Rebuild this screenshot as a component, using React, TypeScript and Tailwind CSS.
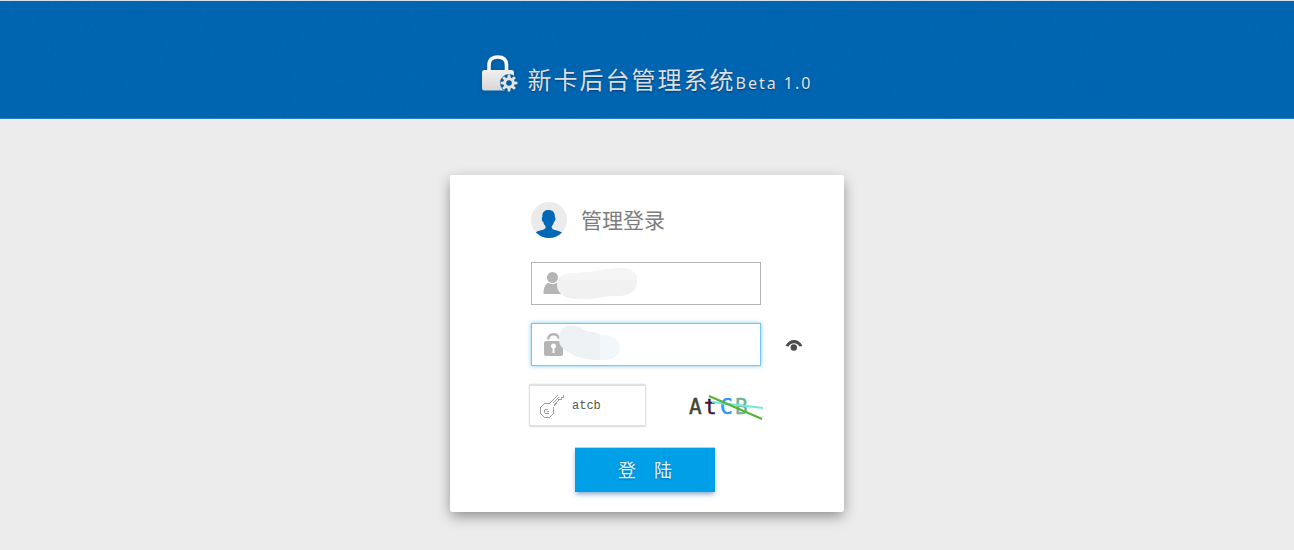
import { useState } from "react";

function HeaderTexture() {
  return (
    <svg className="absolute inset-0 w-full h-full opacity-20" aria-hidden="true">
      <filter id="grain" x="0" y="0" width="100%" height="100%">
        <feTurbulence type="fractalNoise" baseFrequency="0.35" numOctaves="2" seed="4" />
        <feColorMatrix values="0 0 0 0 0  0 0 0 0 0.2  0 0 0 0 0.45  1.8 0 0 0 -0.7" />
      </filter>
      <rect width="100%" height="100%" filter="url(#grain)" />
    </svg>
  );
}

function LockGearIcon() {
  const teeth = [0, 45, 90, 135, 180, 225, 270, 315];
  return (
    <svg width="36" height="38" viewBox="0 0 36 38" className="drop-shadow-sm" aria-hidden="true">
      <defs>
        <linearGradient id="metal" x1="0" y1="0" x2="0" y2="1">
          <stop offset="0" stopColor="#f0f0f0" />
          <stop offset="1" stopColor="#d6d6d6" />
        </linearGradient>
        <mask id="gearCut">
          <rect width="36" height="38" fill="#fff" />
          <circle cx="27" cy="29" r="9" fill="#000" />
        </mask>
      </defs>
      <path
        d="M7 17V11C7 5.500 10.500 3 15.700 3S24.500 5.500 24.500 11V17"
        fill="none"
        stroke="#fafafa"
        strokeWidth="3.600"
      />
      <rect x="0" y="16" width="32" height="20.500" rx="2.500" fill="url(#metal)" mask="url(#gearCut)" />
      <g transform="translate(27 29)">
        <circle r="4.300" fill="none" stroke="#e4e4e4" strokeWidth="3" />
        {teeth.map((angle) => (
          <path key={angle} d="M-1.600 -5L-1.300 -8.400H1.300L1.600 -5Z" fill="#e4e4e4" transform={`rotate(${angle})`} />
        ))}
      </g>
    </svg>
  );
}

function Avatar() {
  return (
    <svg width="36" height="36" viewBox="0 0 36 36" aria-hidden="true">
      <clipPath id="round">
        <circle cx="18" cy="18" r="18" />
      </clipPath>
      <circle cx="18" cy="18" r="18" fill="#ebebeb" />
      <path
        clipPath="url(#round)"
        fill="#0068b7"
        d="M17.500 8C21.500 8 24 10.200 23.800 14.500L24.500 16.500C24.500 18.500 23.700 19.500 23 19.700C22.500 22 21.700 23.200 20.800 24V26.200C22 28 28 28.600 31 30.500L32 37H3L4 30.500C7 28.600 13 28 14.500 26.200V24C13.500 23.200 12.700 22 12.200 19.700C11.300 19.500 10.700 18.500 10.800 16.500L11.400 14.500C11 10.200 13.500 8 17.500 8Z"
      />
    </svg>
  );
}

function UserIcon() {
  return (
    <svg width="18" height="22" viewBox="0 0 18 22" fill="#b5b5b5" aria-hidden="true">
      <circle cx="9.500" cy="5.500" r="5.500" />
      <path d="M0.500 22C0.500 16.500 2 12.500 5 10.800C8 12.600 11 12.600 14 10.800C17 12.500 18.500 16.500 18.500 22Z" />
    </svg>
  );
}

function PadlockIcon() {
  return (
    <svg width="20" height="23" viewBox="0 0 20 23" aria-hidden="true">
      <path d="M4 6.500C4.500 3 6.500 1.300 9.500 1.300S14.500 3 15 6" fill="none" stroke="#b5b5b5" strokeWidth="2.400" />
      <rect y="8" width="19" height="15" rx="2" fill="#b5b5b5" />
      <circle cx="9.500" cy="13" r="2.500" fill="#fff" />
      <rect x="8.500" y="13" width="2" height="7" fill="#fff" />
    </svg>
  );
}

function KeyIcon() {
  return (
    <svg
      width="24"
      height="25"
      viewBox="0 0 24 25"
      fill="none"
      stroke="#a0a0a0"
      shapeRendering="crispEdges"
      aria-hidden="true"
    >
      <path d="M9.500 9.500L17.500 1.500M13.500 12.500L18.500 6.500V5.500H21.500V3.500H23.500V0.500M12.500 9.500L18.500 3.500" />
      <path d="M9.500 9.500H4.500L0.500 13.500V19.500L4.500 23.500H9.500L13.500 19.500V12.500" />
      <path d="M7.500 15.500H5.500L4.500 16.500V18.500L5.500 19.500H8.500M6.500 17.500H8.500" />
    </svg>
  );
}

function EyeIcon() {
  return (
    <svg width="18" height="12" viewBox="0 0 18 12" aria-hidden="true">
      <path d="M0.500 7C2.500 2.800 5.500 1 9 1S15.500 2.800 17.500 7L14.500 7.600C13 5.400 11.200 4.300 9 4.300S5 5.400 3.500 7.600Z" fill="#4c4c4c" />
      <circle cx="8.800" cy="8.500" r="3.200" fill="#4c4c4c" />
    </svg>
  );
}

function Captcha() {
  return (
    <svg
      width="75"
      height="28"
      viewBox="0 0 75 28"
      role="img"
      aria-label="AtCB"
      className="font-['DejaVu_Sans_Mono',monospace]"
      fontSize="21"
      strokeWidth="0.5"
    >
      <text x="1" y="22" fill="#464632" stroke="#464632">A</text>
      <text x="16" y="22" fill="#3c1446" stroke="#3c1446">t</text>
      <text x="32" y="22" fill="#2f95ff" stroke="#2f95ff">C</text>
      <text x="47" y="22" fill="#73b496" stroke="#73b496">B</text>
      <path d="M24 10L75 16" stroke="#6ee8da" strokeWidth="2" />
      <path d="M21 4L74 27" stroke="#55b232" strokeWidth="2" />
    </svg>
  );
}

export default function App() {
  const [user, setUser] = useState("");
  const [password, setPassword] = useState("");
  const [code, setCode] = useState("atcb");
  const [visible, setVisible] = useState(false);

  return (
    <div className="min-h-screen bg-[#ececec] font-['Noto_Sans','Noto_Sans_CJK_SC',sans-serif]">
      <header className="relative border-t border-[#d5e0ea] bg-[#0064b0] pb-[21px] shadow-[inset_0_-1px_0_#2c7dbb]">
        <HeaderTexture />
        <div className="relative flex justify-center pt-[53px]">
          <LockGearIcon />
          <h1 className="ml-[10px] mt-2 flex items-baseline text-2xl leading-9 font-normal tracking-[2px] text-[#dcdfe2] [text-shadow:0_1px_2px_#003c70]">
            新卡后台管理系统
            <small className="text-base font-normal text-[#e2e2e2]">Beta 1.0</small>
          </h1>
        </div>
      </header>

      <main className="flex justify-center pt-14 pb-[38px]">
        <form
          onSubmit={(e) => e.preventDefault()}
          className="w-[394px] rounded-xs bg-white px-[81px] pt-[27px] pb-5 shadow-[0_5px_14px_-1px_rgba(0,0,0,0.42)]"
        >
          <div className="flex items-center gap-[14px]">
            <Avatar />
            <h2 className="text-[21px] leading-9 font-normal text-[#7d7d7d]">管理登录</h2>
          </div>

          <div className="relative mt-6 w-[230px]">
            <span className="absolute left-3 top-[10px]">
              <UserIcon />
            </span>
            <input
              type="text"
              aria-label="用户名"
              value={user}
              onChange={(e) => setUser(e.target.value)}
              className="block h-[43px] w-full border border-[#b5b5b5] pl-10 pr-3 text-sm outline-none"
            />
            <svg width="82" height="32" viewBox="0 0 82 32" className="pointer-events-none absolute left-[25px] top-[6px]" aria-hidden="true">
              <path d="M1 17C1 9 7 5 18 5C36 5 44 1 64 0C76 0 82 6 81 13C81 22 75 27 64 28C52 28 46 29 40 30C28 32 16 32 8 28C3 25 1 21 1 17Z" fill="#f1f1f1" />
              <path d="M2 12C4 7 9 5 18 5C36 5 44 1 64 0C76 0 82 6 81 12Z" fill="#f5f5f5" />
            </svg>
          </div>

          <div className="mt-[18px] flex items-center">
            <div className="relative w-[230px] shrink-0">
              <span className="absolute left-[13px] top-[10px]">
                <PadlockIcon />
              </span>
              <input
                type={visible ? "text" : "password"}
                aria-label="密码"
                value={password}
                onChange={(e) => setPassword(e.target.value)}
                className="block h-[43px] w-full border border-[#72c8f2] pl-10 pr-3 text-sm shadow-[0_0_4px_#72c8f2] outline-none"
              />
              <svg width="63" height="36" viewBox="0 0 63 36" className="pointer-events-none absolute left-[27px] top-[2px]" aria-hidden="true">
                <path d="M1 14C1 5 7 0 14 1C24 1 26 6 32 7C38 7 42 9 42 10V35C30 35 26 33 20 32C14 30 12 28 9 26C3 23 1 19 1 14Z" fill="#edf1f4" />
                <path d="M42 10C54 10 62 14 62 23C62 31 54 36 42 35Z" fill="#f1f7fb" />
              </svg>
            </div>
            <button
              type="button"
              aria-label="显示密码"
              onClick={() => setVisible(!visible)}
              className="ml-6 shrink-0"
            >
              <EyeIcon />
            </button>
          </div>

          <div className="-ml-[2px] mt-[18px] flex items-center justify-between">
            <div className="relative">
              <span className="absolute left-[11px] top-[10px]">
                <KeyIcon />
              </span>
              <input
                type="text"
                aria-label="验证码"
                value={code}
                onChange={(e) => setCode(e.target.value)}
                className="block h-[43px] w-[117px] rounded-xs border border-y-2 border-[#e1e1e1] pl-[42px] pr-2 font-['Liberation_Mono',monospace] text-xs text-[#555] shadow-[0_0_2px_#ddd] outline-none"
              />
            </div>
            <Captcha />
          </div>

          <button
            type="submit"
            className="ml-11 mt-5 block h-[45px] w-[140px] border-t border-[#9bdcf9] bg-[#00a0e9] text-lg font-normal text-[#e4f4fd] shadow-[0_3px_5px_-1px_rgba(0,70,150,0.5)] [text-shadow:0_1px_2px_#0068a8]"
          >
            登　陆
          </button>
        </form>
      </main>
    </div>
  );
}
